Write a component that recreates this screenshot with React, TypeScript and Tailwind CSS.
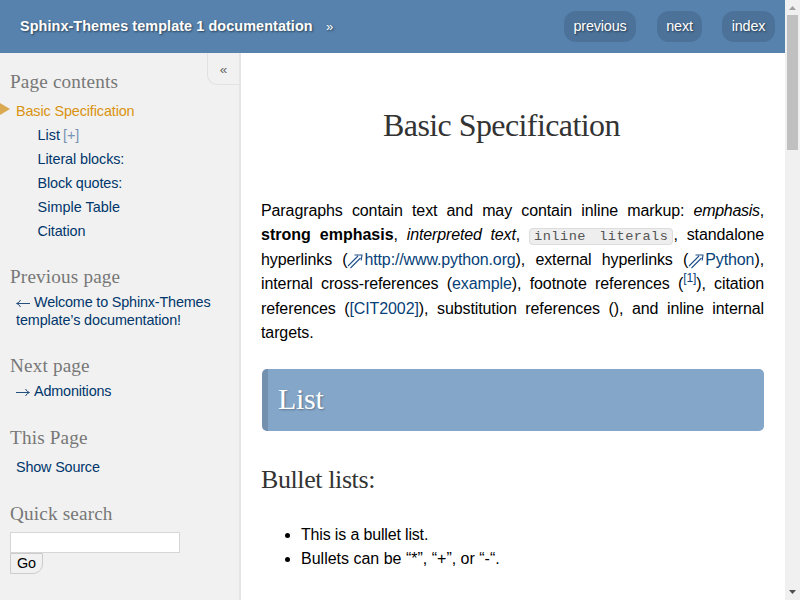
import type { ReactNode } from "react";

const link = "text-[#00366b]";
const bodyLink = "text-[#073f78]";

function SideHeading({ children }: { children: ReactNode }) {
  return (
    <h3 className="ml-[10px] h-6 font-['Liberation_Serif',serif] text-[19.2px] leading-6 tracking-[0.16px] text-[#777] whitespace-nowrap">
      {children}
    </h3>
  );
}

function NavButton({ children, className }: { children: ReactNode; className: string }) {
  return (
    <a
      className={`flex h-[31px] items-center justify-center rounded-[12px] bg-[#4c7299] text-[14.4px] tracking-[-0.15px] text-white [text-shadow:1px_1px_2px_rgba(0,0,0,0.5)] ${className}`}
    >
      {children}
    </a>
  );
}

function ExternalArrow() {
  return (
    <svg className="inline-block align-[-4px]" width="17" height="16" viewBox="0 0 17 16" fill="none" stroke="#1f4f88" strokeWidth="1.1">
      <path d="M1 13 L11 3 M3.5 15 L13.5 5 M7.5 2 H15 L14.2 7.5" />
    </svg>
  );
}

function SideArrow({ d }: { d: string }) {
  return (
    <svg className="mr-1 inline-block align-[-1px]" width="14" height="9" viewBox="0 0 14 9" fill="none" stroke="#254f7c" strokeWidth="1">
      <path d={d} />
    </svg>
  );
}

export default function App() {
  return (
    <div className="flex h-[600px] w-[800px] overflow-hidden bg-white font-['Liberation_Sans',sans-serif] text-black">
      <div className="flex w-[785px] flex-col">
        <header className="flex h-[53px] shrink-0 items-center bg-[#5682ad] text-white [text-shadow:1px_1px_2px_rgba(0,0,0,0.5)]">
          <span className="ml-5 w-[293px] text-[14.4px] font-bold tracking-[0.085px] whitespace-nowrap">
            Sphinx-Themes template 1 documentation
          </span>
          <span className="ml-[13px] text-[13px]">»</span>
          <nav className="mr-[10px] ml-auto flex">
            <NavButton className="w-[72px]">previous</NavButton>
            <NavButton className="ml-[21px] w-[45px]">next</NavButton>
            <NavButton className="ml-5 w-[53px]">index</NavButton>
          </nav>
        </header>
        <div className="flex min-h-0 flex-1">
          <aside className="relative w-[241px] shrink-0 bg-[#f1f1f1] pt-[17px] text-[14.4px] shadow-[inset_-2px_0_1px_#e4e4e4]">
            <button className="absolute top-0 right-0 h-8 w-[34px] rounded-bl-[10px] border-b border-l border-[#e2e2e2] pt-[3px] pr-[2px] text-[13.5px] text-[#666]">
              «
            </button>
            <SideHeading>Page contents</SideHeading>
            <ul className="mt-[5px] leading-6">
              <li className="flex items-center tracking-[-0.12px] text-[#d9930e]">
                <svg className="mr-[6px] -mt-[5px]" width="10" height="12" viewBox="0 0 10 12">
                  <path d="M0 0 L10 6 L0 12 Z" fill="#dbaa50" />
                </svg>
                Basic Specification
              </li>
              <li className={`pl-[37.5px] ${link}`}>
                List <span className="-ml-px text-[#7794b3]">[+]</span>
              </li>
              <li className={`pl-[37.5px] tracking-[-0.08px] ${link}`}>Literal blocks:</li>
              <li className={`pl-[37.5px] tracking-[-0.14px] ${link}`}>Block quotes:</li>
              <li className={`pl-[37.5px] tracking-[0.04px] ${link}`}>Simple Table</li>
              <li className={`pl-[37.5px] tracking-[-0.12px] ${link}`}>Citation</li>
            </ul>
            <div className="h-[22px]" />
            <SideHeading>Previous page</SideHeading>
            <p className={`mt-[4px] ml-4 leading-[18px] tracking-[-0.14px] whitespace-nowrap ${link}`}>
              <span className="tracking-[-0.17px]">
                <SideArrow d="M14 4.5 H1 M4.5 1 Q3 4 0.5 4.5 Q3 5 4.5 8" />
                Welcome to Sphinx-Themes
              </span>
              <br />
              <span className="tracking-[-0.11px]">template’s documentation!</span>
            </p>
            <div className="h-[25px]" />
            <SideHeading>Next page</SideHeading>
            <p className={`mt-[4px] ml-4 leading-[18px] tracking-[-0.17px] ${link}`}>
              <SideArrow d="M0 4.5 H13 M9.5 1 Q11 4 13.5 4.5 Q11 5 9.5 8" />
              Admonitions
            </p>
            <div className="h-[26px]" />
            <SideHeading>This Page</SideHeading>
            <p className={`mt-[8px] ml-4 leading-[18px] tracking-[-0.17px] ${link}`}>Show Source</p>
            <div className="h-[26px]" />
            <SideHeading>Quick search</SideHeading>
            <form className="mt-[6px] ml-[10px]">
              <input className="block h-[21px] w-[170px] border border-[#d6d6d6] bg-white" />
              <button className="block h-[21px] w-[33px] rounded-br-[10px] border border-[#ccc] text-[14.4px] leading-[17px]">
                Go
              </button>
            </form>
          </aside>
          <main className="flex-1 pr-[21px] pl-5">
            <h1 className="mt-[50px] h-[44px] pr-[22px] text-center font-['Liberation_Serif',serif] text-[32px] leading-[44px] tracking-[-0.58px] text-[#333]">
              Basic Specification
            </h1>
            <p className="mt-[52px] text-justify text-[16px] leading-[24.4px] tracking-[-0.1px]">
              Paragraphs contain text and may contain inline markup: <em className="tracking-[-0.3px]">emphasis</em>,{" "}
              <strong className="tracking-normal">strong emphasis</strong>, <em className="tracking-[-0.15px]">interpreted text</em>,{" "}
              <code className="rounded-[4px] border border-[#ddd] bg-[#eee] px-1 font-['Liberation_Mono',monospace] text-[13.6px] leading-none tracking-[0.5px] text-[#555]">
                inline literals
              </code>
              , standalone hyperlinks (<ExternalArrow /><a className={`tracking-[-0.13px] ${bodyLink}`}>http://www.python.org</a>), external
              hyperlinks (<ExternalArrow /><a className={bodyLink}>Python</a>), internal cross-references (
              <a className={bodyLink}>example</a>), footnote references (
              <a className={`relative -top-[7px] text-[12px] leading-none ${bodyLink}`}>[1]</a>), citation references (
              <a className={bodyLink}>[CIT2002]</a>), substitution references (), and inline internal targets.
            </p>
            <h2 className="mt-[24px] ml-px h-[62px] rounded-[5px] border-l-[6px] border-[#7390ae] bg-[#84a6c8] pl-[10px] font-['Liberation_Serif',serif] text-[30px] leading-[60px] tracking-[-0.3px] text-white [text-shadow:1px_1px_2px_rgba(0,0,0,0.3)]">
              List
            </h2>
            <h3 className="mt-[31px] h-9 font-['Liberation_Serif',serif] text-[26px] leading-9 tracking-[-0.4px] text-[#333]">Bullet lists:</h3>
            <ul className="mt-[25px] list-disc pl-10 text-[16px] leading-6">
              <li className="tracking-[-0.16px]">This is a bullet list.</li>
              <li>Bullets can be “*”, “+”, or “-“.</li>
            </ul>
          </main>
        </div>
      </div>
      <div className="flex w-[15px] flex-col items-center bg-[#f0f0f0]">
        <svg className="h-[15px] w-[15px]" viewBox="0 0 15 15">
          <path d="M4 10 L7.5 6 L11 10 Z" fill="#a0a0a0" />
        </svg>
        <div className="h-[135px] w-[11px] bg-[#c0c0c0]" />
        <svg className="mt-auto h-[15px] w-[15px]" viewBox="0 0 15 15">
          <path d="M4 5 L7.5 9 L11 5 Z" fill="#505050" />
        </svg>
      </div>
    </div>
  );
}
